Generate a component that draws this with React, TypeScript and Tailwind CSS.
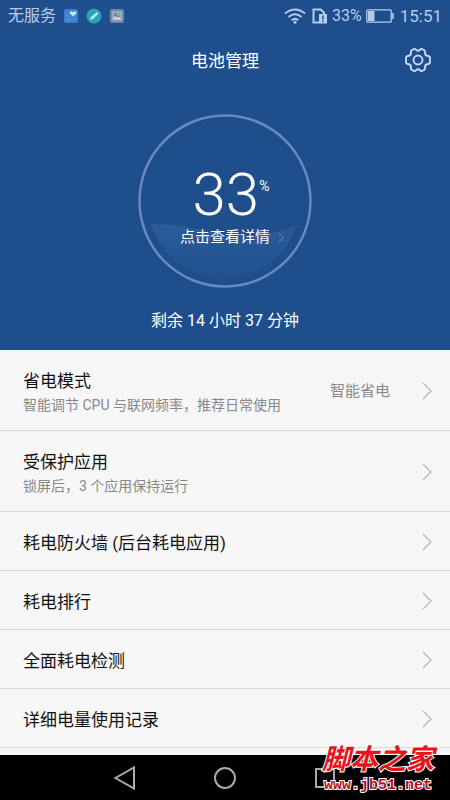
import { ReactNode } from 'react';
import clsx from 'clsx';

interface Setting {
  title: string;
  summary?: string;
  value?: string;
}

const SETTINGS: Setting[] = [
  { title: '省电模式', summary: '智能调节 CPU 与联网频率，推荐日常使用', value: '智能省电' },
  { title: '受保护应用', summary: '锁屏后，3 个应用保持运行' },
  { title: '耗电防火墙 (后台耗电应用)' },
  { title: '耗电排行' },
  { title: '全面耗电检测' },
  { title: '详细电量使用记录' },
];

function Chevron({ className }: { className: string }) {
  return (
    <svg viewBox="0 0 10 18" fill="none" stroke="currentColor" className={className} aria-hidden="true">
      <path d="M1 1l8 8-8 8" strokeWidth="1.3" />
    </svg>
  );
}

function StatusBar() {
  return (
    <div className="flex h-8 items-center justify-between px-2 text-[#b5cdec]">
      <div className="flex items-center gap-2">
        <span className="text-base leading-8">无服务</span>
        <svg viewBox="0 0 14 14" className="size-3.5">
          <rect width="14" height="14" rx="2" fill="#3c80d0" />
          <path d="M9 7.5L5.8 4.6C4.8 3.2 6.8 1.2 9 3.2c2-2 4.4-.2 3.2 1.4z" fill="#c9e3fb" />
          <path d="M2 6h2M3 8h2M2 11h3M6 9l1 2M9 10h2" stroke="#6ba3e0" />
        </svg>
        <svg viewBox="0 0 16 16" className="size-4">
          <circle cx="8" cy="8" r="7.5" fill="#2aa5b5" />
          <path d="M4 12l1-3 6-5 1.5 1.5-5.5 5.5z" fill="#c3e8ef" />
        </svg>
        <svg viewBox="0 0 14 14" className="size-3.5">
          <rect width="14" height="14" rx="2" fill="#7388a6" />
          <rect x="3" y="3" width="8" height="8" fill="none" stroke="#bdc9d9" />
          <path d="M3 10l2.5-3 2 2L9 7.5l2 3z" fill="#d5dce6" />
          <circle cx="8.5" cy="5.3" r=".9" fill="#d5dce6" />
        </svg>
      </div>
      <div className="flex items-center">
        <svg viewBox="0 0 22 16" fill="none" stroke="currentColor" strokeWidth="2" className="mr-1.5 h-4 w-[22px]">
          <path d="M1 5.5q10-8 20 0M4.5 9q6.500-5.500 13 0M7.700 12.200q3.300-2.700 6.600 0" />
          <circle cx="11" cy="14.300" r="1.500" fill="currentColor" stroke="none" />
        </svg>
        <svg viewBox="0 0 16 16" className="mr-1 size-4">
          <path d="M7 14.500H1.500V1.500h7l3.500 3v2" fill="none" stroke="currentColor" strokeWidth="2" />
          <path d="M7 6h8v9.500H7z" fill="currentColor" />
          <path d="M11 7.500v4M11 12.500v1.500" stroke="#1f4e8d" strokeWidth="1.500" />
        </svg>
        <span className="mr-1 text-base leading-8">33%</span>
        <svg viewBox="0 0 28 14" className="mr-1.5 h-3.5 w-7">
          <rect x=".8" y=".8" width="24.400" height="12.400" rx="1" fill="none" stroke="currentColor" strokeWidth="1.300" />
          <rect x="2" y="2" width="6.500" height="10" fill="currentColor" />
          <path d="M27 4v6" stroke="currentColor" strokeWidth="1.600" />
        </svg>
        <span className="text-[17px] leading-8">15:51</span>
      </div>
    </div>
  );
}

function BatteryGauge() {
  return (
    <button type="button" className="relative mx-auto flex size-[174px] flex-col items-center rounded-full">
      <svg viewBox="0 0 174 174" className="absolute inset-0 size-full" aria-hidden="true">
        <defs>
          <linearGradient id="water" x1="0" y1="0" x2="0" y2="1">
            <stop offset="0" stopColor="#2c5b99" />
            <stop offset="1" stopColor="#21508f" />
          </linearGradient>
        </defs>
        <path d="M13 110q30 0 64 9t81-7a76 76 0 0 1-145-2z" fill="url(#water)" />
        <circle cx="87" cy="87" r="85.500" fill="none" stroke="#648cc0" strokeWidth="2.500" />
      </svg>
      <span className="relative mt-[50px] flex items-start pl-3">
        <span className="text-6xl font-light leading-[62px]">33</span>
        <span className="mt-3 text-sm leading-5">%</span>
      </span>
      <span className="relative flex items-center gap-2 pl-3.5 text-[15px] leading-[22px]">
        点击查看详情
        <Chevron className="h-[11px] w-1.5 text-[#7e9fca]" />
      </span>
    </button>
  );
}

function SettingRow({ title, summary, value }: Setting) {
  return (
    <li className="border-b border-[#d9d9d9]">
      <button
        type="button"
        className={clsx('flex w-full items-center pl-[23px] pr-[18px] pt-0.5 text-left', summary ? 'h-20' : 'h-[58px]')}
      >
        <span className={clsx('flex grow flex-col', summary ? 'pt-1' : 'pt-0.5')}>
          <span className="text-[17px] leading-6 text-[#111]">{title}</span>
          {summary && <span className="text-sm leading-6 text-[#888]">{summary}</span>}
        </span>
        {value && <span className="mr-8 text-[15px] text-[#888]">{value}</span>}
        <Chevron className="h-[18px] w-2.5 text-[#b8b8b8]" />
      </button>
    </li>
  );
}

function NavButton({ label, children }: { label: string; children: ReactNode }) {
  return (
    <button type="button" aria-label={label} className="flex size-9 items-center justify-center">
      <svg viewBox="0 0 24 24" fill="none" stroke="#aaa" strokeWidth="2" className="size-6">
        {children}
      </svg>
    </button>
  );
}

export default function App() {
  return (
    <div className="relative flex min-h-screen flex-col bg-[#f7f7f7] font-[Roboto,'Noto_Sans_CJK_SC',sans-serif]">
      <header className="bg-[#1f4e8d] pb-4 text-white">
        <StatusBar />
        <div className="grid h-[82px] grid-cols-[1fr_auto_1fr] items-start pt-3">
          <h1 className="col-start-2 mt-1 text-[17px] leading-[26px]">电池管理</h1>
          <button type="button" aria-label="设置" className="mr-[18px] mt-0.5 justify-self-end">
            <svg viewBox="0 0 28 28" fill="none" stroke="#c2d9f7" strokeWidth="1.900" strokeLinejoin="round" className="size-7">
              <path d="M9.500 3.200Q11 2.200 12 3.700Q14 5.600 16 3.700Q17 2.200 18.500 3.200L20.500 4.400Q21.500 5.200 21 6.500Q20.800 9.700 24 10Q26 10.200 26 12V16Q26 17.800 24 18Q20.800 18.300 21 21.500Q21.500 22.800 20.500 23.600L18.500 24.800Q17 25.800 16 24.300Q14 22.400 12 24.300Q11 25.800 9.500 24.800L7.500 23.600Q6.500 22.800 7 21.500Q7.200 18.300 4 18Q2 17.800 2 16V12Q2 10.200 4 10Q7.200 9.700 7 6.500Q6.500 5.200 7.500 4.400Z" />
              <circle cx="14" cy="14" r="4.500" />
            </svg>
          </button>
        </div>
        <BatteryGauge />
        <p className="mt-5 text-center text-base leading-[26px]">剩余 14 小时 37 分钟</p>
      </header>

      <main className="grow">
        <ul>
          {SETTINGS.map((item) => (
            <SettingRow key={item.title} {...item} />
          ))}
        </ul>
      </main>

      <nav className="flex h-[45px] items-center justify-center gap-16 bg-black">
        <NavButton label="返回">
          <path d="M21 1.500v21L2.500 12z" />
        </NavButton>
        <NavButton label="主页">
          <circle cx="12" cy="12" r="10" />
        </NavButton>
        <NavButton label="最近任务">
          <rect x="3" y="3" width="18" height="18" />
        </NavButton>
      </nav>

      {/* site mark */}
      <div className="pointer-events-none absolute bottom-1.5 right-4 flex flex-col items-center gap-1 whitespace-nowrap font-bold [paint-order:stroke_fill] [-webkit-text-stroke:2px_white]">
        <span className="text-[28px] italic leading-7 text-[#e8141c]">脚本之家</span>
        <span className="font-['Liberation_Mono',monospace] text-[15px] leading-4 text-[#b5121b]">www.jb51.net</span>
      </div>
    </div>
  );
}
